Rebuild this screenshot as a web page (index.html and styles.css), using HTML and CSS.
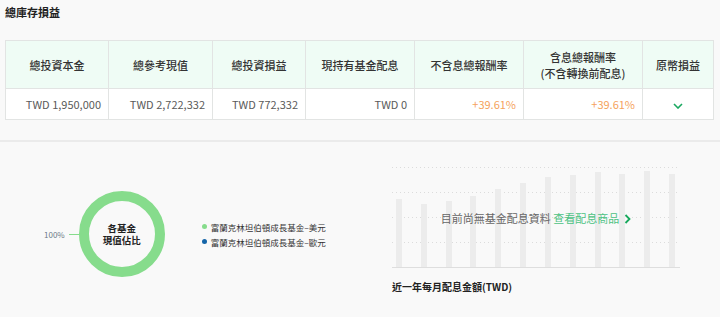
FILE: index.html
```html
<!DOCTYPE html>
<html lang="zh-Hant">
<head>
<meta charset="utf-8">
<title>總庫存損益</title>
<link rel="stylesheet" href="styles.css">
</head>
<body>
<div class="page">
  <h2 class="title">總庫存損益</h2>
  <table class="summary">
    <colgroup>
      <col class="c1"><col class="c2"><col class="c3"><col class="c4"><col class="c5"><col class="c6"><col class="c7">
    </colgroup>
    <thead>
      <tr>
        <th>總投資本金</th>
        <th>總參考現值</th>
        <th>總投資損益</th>
        <th>現持有基金配息</th>
        <th>不含息總報酬率</th>
        <th>含息總報酬率<br>(不含轉換前配息)</th>
        <th>原幣損益</th>
      </tr>
    </thead>
    <tbody>
      <tr>
        <td>TWD 1,950,000</td>
        <td>TWD 2,722,332</td>
        <td>TWD 772,332</td>
        <td>TWD 0</td>
        <td class="pos">+39.61%</td>
        <td class="pos">+39.61%</td>
        <td class="toggle"><svg width="10" height="6" viewBox="0 0 10 6"><path d="M1 1 L5 5 L9 1" fill="none" stroke="#1aa860" stroke-width="1.6"/></svg></td>
      </tr>
    </tbody>
  </table>
</div>
<div class="divider"></div>
<div class="lower">
  <div class="pie-panel">
    <div class="pie-label"><span>100%</span><i class="leader"></i></div>
    <div class="donut">
      <svg width="86" height="86" viewBox="0 0 86 86"><circle cx="43" cy="43" r="38" fill="none" stroke="#86dc8c" stroke-width="10"/></svg>
      <div class="donut-text"><span>各基金</span><span>現值佔比</span></div>
    </div>
    <ul class="legend">
      <li><i class="dot green"></i>富蘭克林坦伯頓成長基金–美元</li>
      <li><i class="dot blue"></i>富蘭克林坦伯頓成長基金–歐元</li>
    </ul>
  </div>
  <div class="chart-panel">
    <div class="plot">
      <div class="grid">
        <i class="gl"></i><i class="gl"></i><i class="gl"></i><i class="gl"></i><i class="base"></i>
      </div>
      <div class="bars">
        <i class="bar" style="height:68px"></i>
        <i class="bar" style="height:63px"></i>
        <i class="bar" style="height:66px"></i>
        <i class="bar" style="height:71px"></i>
        <i class="bar" style="height:78px"></i>
        <i class="bar" style="height:84px"></i>
        <i class="bar" style="height:90px"></i>
        <i class="bar" style="height:92px"></i>
        <i class="bar" style="height:95px"></i>
        <i class="bar" style="height:93px"></i>
        <i class="bar" style="height:96px"></i>
        <i class="bar" style="height:93px"></i>
      </div>
      <div class="empty-msg">目前尚無基金配息資料 <a class="link">查看配息商品<svg width="7" height="10" viewBox="0 0 7 10"><path d="M1.5 1 L5.5 5 L1.5 9" fill="none" stroke="#17a85c" stroke-width="1.8"/></svg></a></div>
    </div>
    <div class="chart-title">近一年每月配息金額(TWD)</div>
  </div>
</div>
</body>
</html>
```
FILE: styles.css
```css
html, body {
  margin: 0;
  padding: 0;
  background: #f9f9f9;
  font-family: "Noto Sans CJK TC", "Noto Sans", sans-serif;
  color: #333;
}
.page {
  padding: 0 7px 0 5px;
}
.title {
  margin: 0;
  padding-top: 3px;
  font-size: 11px;
  line-height: 18px;
  font-weight: 700;
  color: #222;
}
.summary {
  margin-top: 19px;
  width: 708px;
  border-collapse: collapse;
  table-layout: fixed;
  background: #fff;
}
.c1 { width: 103px; }
.c2 { width: 104px; }
.c3 { width: 93px; }
.c4 { width: 109px; }
.c5 { width: 109px; }
.c6 { width: 119px; }
.c7 { width: 71px; }
.summary th, .summary td {
  border: 1px solid #e2e4e3;
  padding: 0 7px;
}
.summary th {
  height: 47px;
  background: #effcf5;
  font-size: 11px;
  line-height: 16px;
  font-weight: 500;
  color: #333;
  text-align: center;
}
.summary td {
  height: 30px;
  font-size: 11px;
  color: #5a5a5a;
  text-align: right;
  background: #fff;
}
.summary td.pos { color: #f5a35c; }
.summary td.toggle { text-align: center; }
.summary td.toggle svg { display: inline-block; vertical-align: middle; }
.divider {
  margin-top: 20px;
  height: 2px;
  background: #ebebeb;
}
.lower {
  display: flex;
  height: 176px;
}
.pie-panel {
  width: 392px;
  display: flex;
  align-items: center;
  padding-top: 49px;
  align-self: flex-start;
  padding-left: 44px;
  box-sizing: border-box;
}
.pie-label {
  display: flex;
  align-items: center;
  font-size: 8px;
  color: #6b7a88;
}
.leader {
  display: block;
  width: 10px;
  height: 1px;
  background: #86dc8c;
  margin-left: 4px;
}
.donut {
  position: relative;
  width: 86px;
  height: 86px;
}
.donut svg { display: block; }
.donut-text {
  position: absolute;
  inset: 0;
  display: flex;
  flex-direction: column;
  align-items: center;
  justify-content: center;
  text-align: center;
  font-size: 9.5px;
  line-height: 12.5px;
  font-weight: 700;
  color: #222;
}
.legend {
  list-style: none;
  margin: 0 0 0 37px;
  padding: 0;
  font-size: 8.5px;
  color: #333;
}
.legend li {
  display: flex;
  align-items: center;
  height: 15px;
}
.dot {
  display: block;
  width: 5px;
  height: 5px;
  border-radius: 50%;
  margin-right: 4px;
}
.dot.green { background: #86dc8c; }
.dot.blue { background: #1565a8; }
.chart-panel {
  width: 288px;
  padding-top: 25px;
}
.plot {
  position: relative;
  height: 101px;
}
.grid {
  position: absolute;
  inset: 0;
  display: flex;
  flex-direction: column;
  justify-content: space-between;
}
.gl {
  display: block;
  height: 1px;
  background-image: linear-gradient(to right, #dcdcdc 1px, transparent 1px);
  background-size: 4px 1px;
}
.base {
  display: block;
  height: 1px;
  background: #dedede;
}
.bars {
  position: absolute;
  left: 4px;
  right: 5px;
  top: 0;
  bottom: 1px;
  display: flex;
  align-items: flex-end;
  justify-content: space-between;
}
.bar {
  display: block;
  width: 6px;
  background: #ececec;
}
.empty-msg {
  position: absolute;
  left: 0;
  right: 0;
  top: 43px;
  text-align: center;
  font-size: 11px;
  line-height: 16px;
  color: #666;
}
.link {
  color: #4cc283;
}
.link svg {
  margin-left: 5px;
  vertical-align: -1px;
}
.chart-title {
  margin-top: 12px;
  font-size: 10px;
  line-height: 14px;
  font-weight: 700;
  color: #222;
}
```
